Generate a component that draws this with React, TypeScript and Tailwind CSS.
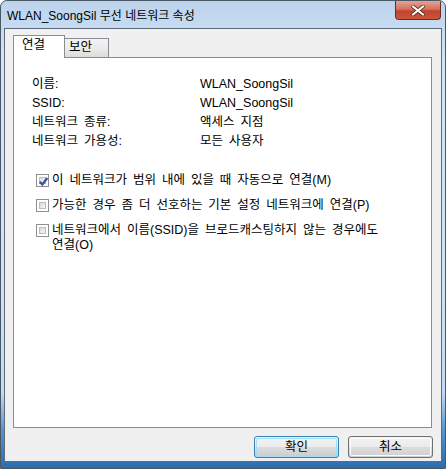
import React from "react";

const font = "font-['Liberation_Sans','Noto_Sans_CJK_KR',sans-serif]";

const info = [
  ["이름:", "WLAN_SoongSil"],
  ["SSID:", "WLAN_SoongSil"],
  ["네트워크 종류:", "액세스 지점"],
  ["네트워크 가용성:", "모든 사용자"],
];

const Checkbox = ({ checked }: { checked?: boolean }) => (
  <div className="w-[13px] h-[13px] shrink-0 border border-[#8e8f8f] bg-white p-[2px] mt-[1px]">
    <div className="w-full h-full border border-[#b9bcc0] bg-gradient-to-br from-[#d8d9da] to-[#f7f7f7] relative">
      {checked && (
        <svg viewBox="0 0 9 9" className="absolute -left-[2px] -top-[2px] w-[11px] h-[11px]">
          <path d="M1.5 4.8 L3.6 7 L7.6 1.6" fill="none" stroke="#3b549c" strokeWidth="1.9" />
        </svg>
      )}
    </div>
  </div>
);

const Option = ({ checked, children }: { checked?: boolean; children: React.ReactNode }) => (
  <div className="flex items-start gap-[3px]">
    <Checkbox checked={checked} />
    <span className="leading-[15px] [word-spacing:2.5px] text-[12.5px]">{children}</span>
  </div>
);

const Button = ({ children, primary }: { children: React.ReactNode; primary?: boolean }) => (
  <button
    type="button"
    className={
      primary
        ? "w-[85px] h-[22px] rounded-[3px] border border-[#3c7fb1] p-px bg-[linear-gradient(180deg,#eaf6fd_0%,#d9f0fc_48%,#bee6fd_50%,#a7d9f5_100%)] flex"
        : "w-[85px] h-[22px] rounded-[3px] border border-[#707070] p-px bg-[linear-gradient(180deg,#f2f2f2_0%,#ebebeb_48%,#dddddd_50%,#cfcfcf_100%)] flex"
    }
  >
    <span
      className={
        primary
          ? "flex-1 rounded-[2px] border border-[#9ee0fb] bg-[linear-gradient(180deg,#f2f2f2_0%,#ebebeb_48%,#dddddd_50%,#cfcfcf_100%)] flex items-center justify-center text-[12.5px] text-black"
          : "flex-1 rounded-[2px] border border-[#fcfcfc] flex items-center justify-center text-[12.5px] text-black"
      }
    >
      {children}
    </span>
  </button>
);

export default function App() {
  return (
    <div
      className={`w-[446px] h-[469px] flex flex-col rounded-t-[7px] border border-[#4a5866] overflow-hidden bg-[linear-gradient(180deg,#bcd3ec_0%,#d2e5f8_12%,#cfe3f7_60%,#c2daf3_84%,#5593d0_92%,#2d6cae_100%)] ${font} text-[12px] text-black`}
    >
      <div className="h-[27px] flex items-start shrink-0">
        <div className="pl-[6px] pt-[7px] leading-[16px] text-[12px] text-black">
          WLAN_SoongSil 무선 네트워크 속성
        </div>
        <div className="ml-auto mr-[4px] w-[46px] h-[19px] rounded-b-[4px] border border-t-0 border-[#6b2a22] bg-[linear-gradient(180deg,#e6a194_0%,#d4735f_45%,#c0442c_55%,#c9563a_100%)] flex items-center justify-center">
          <svg viewBox="0 0 14 11" className="w-[14px] h-[11px]">
            <path d="M2 1.5 L12 9.5 M12 1.5 L2 9.5" stroke="#5a2c25" strokeWidth="3.6" strokeLinecap="round" />
            <path d="M2 1.5 L12 9.5 M12 1.5 L2 9.5" stroke="#ffffff" strokeWidth="2.2" strokeLinecap="round" />
          </svg>
        </div>
      </div>

      <div className="flex-1 mx-[3px] mb-[6px] border border-[#5c6b7a] bg-[#f0f0f0] flex flex-col pl-[8px] pr-[9px] pt-[6px]">
        <div className="flex items-end h-[22px] shrink-0 text-[12.5px]">
          <div className="relative z-10 -mb-px h-[23px] w-[52px] bg-white border border-b-0 border-[#898c95] pl-[8px] pt-[1px] leading-[16px]">
            연결
          </div>
          <div className="h-[19px] w-[44px] border border-l-0 border-b-0 border-[#898c95] bg-[linear-gradient(180deg,#f3f3f3_0%,#ebebeb_50%,#dcdcdc_100%)] pl-[4px] leading-[17px]">
            보안
          </div>
        </div>

        <div className="flex-1 bg-white border border-[#898c95] pt-[17px]">
          <div className="pl-[18px] flex flex-col text-[12.5px] [word-spacing:2.5px]">
            {info.map(([k, v]) => (
              <div key={k} className="h-[19px] flex items-center">
                <span className="w-[168px]">{k}</span>
                <span>{v}</span>
              </div>
            ))}
          </div>
          <div className="pl-[22px] mt-[22px] flex flex-col gap-[10px]">
            <Option checked>이 네트워크가 범위 내에 있을 때 자동으로 연결(M)</Option>
            <Option>가능한 경우 좀 더 선호하는 기본 설정 네트워크에 연결(P)</Option>
            <Option>
              네트워크에서 이름(SSID)을 브로드캐스팅하지 않는 경우에도
              <br />
              연결(O)
            </Option>
          </div>
        </div>

        <div className="h-[33px] shrink-0 flex items-start justify-end gap-[9px] pt-[8px] -mr-[1px]">
          <Button primary>확인</Button>
          <Button>취소</Button>
        </div>
      </div>
    </div>
  );
}
